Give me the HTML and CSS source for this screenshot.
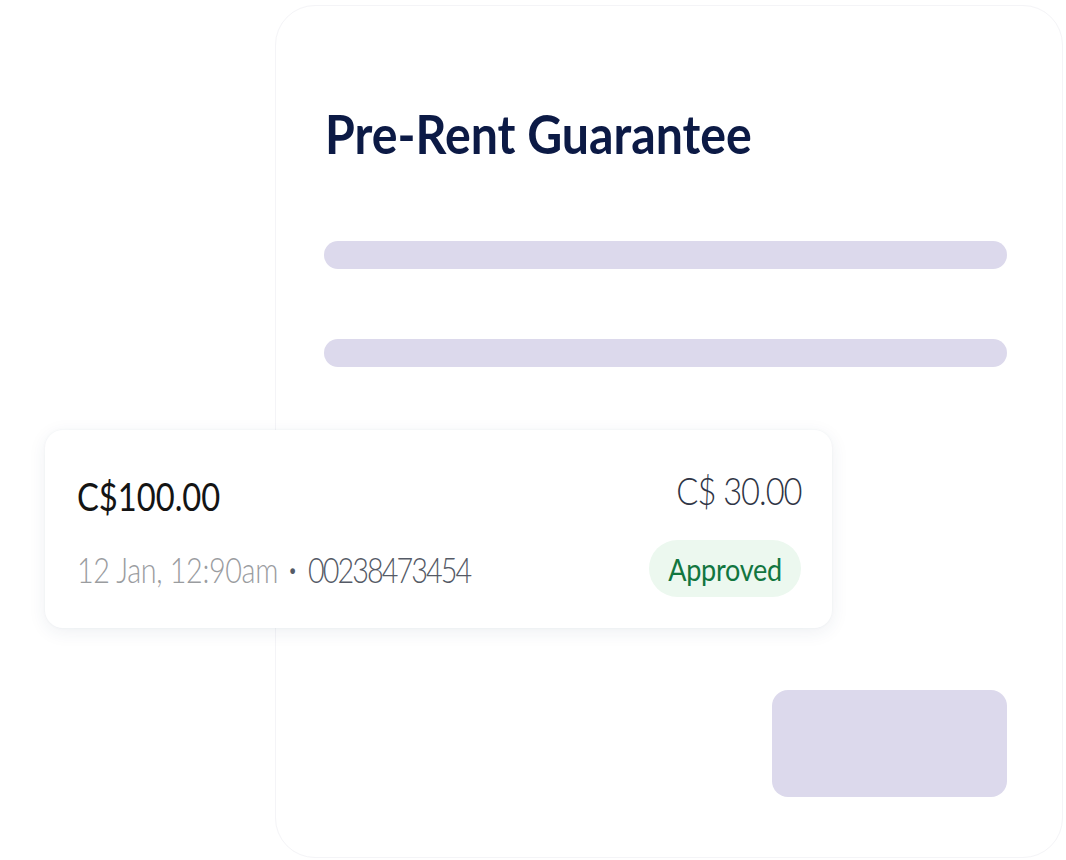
FILE: index.html
```html
<!DOCTYPE html>
<html lang="en">
<head>
<meta charset="utf-8">
<title>Pre-Rent Guarantee</title>
<link rel="stylesheet" href="styles.css">
</head>
<body>
<div class="board">
  <h1 class="title">Pre-Rent Guarantee</h1>
  <div class="bar bar-first"></div>
  <div class="bar bar-second"></div>
  <div class="tx-card">
    <div class="tx-row">
      <span class="tx-amount">C$100.00</span>
      <span class="tx-fee">C$ 30.00</span>
    </div>
    <div class="tx-row tx-row-meta">
      <span class="tx-meta"><span class="tx-date">12 Jan, 12:90am</span><span class="tx-dot">•</span><span class="tx-id">00238473454</span></span>
      <span class="badge"><span class="badge-text">Approved</span></span>
    </div>
  </div>
  <div class="action"></div>
</div>
</body>
</html>
```

FILE: styles.css
```css
* { box-sizing: border-box; }
html, body { margin: 0; padding: 0; background: #ffffff; }
body {
  font-family: Lato, "Open Sans", sans-serif;
  width: 1066px;
  height: 860px;
  overflow: hidden;
}
.board {
  margin: 5px 3px 0 275px;
  height: 853px;
  border: 1px solid #f4f4f7;
  border-radius: 40px;
  padding: 0 55px 0 48px;
  display: flex;
  flex-direction: column;
}
.title {
  margin: 96px 0 0 1px;
  font-size: 53px;
  line-height: 64px;
  font-weight: 700;
  color: #0c1a45;
  letter-spacing: 0;
  transform: scaleX(0.91);
  transform-origin: left center;
  white-space: nowrap;
}
.bar {
  height: 28px;
  border-radius: 14px;
  background: #dcd9ec;
}
.bar-first { margin-top: 75px; }
.bar-second { margin-top: 70px; }
.tx-card {
  margin: 63px 0 0 -279px;
  width: 787px;
  height: 198px;
  background: #ffffff;
  border-radius: 18px;
  box-shadow: 0 4px 18px rgba(40, 60, 100, 0.08), 0 0 3px rgba(40, 60, 100, 0.05);
  padding: 41px 31px 0 32px;
  display: flex;
  flex-direction: column;
}
.tx-row {
  display: flex;
  justify-content: space-between;
  align-items: flex-start;
}
.tx-amount {
  font-size: 38px;
  line-height: 50px;
  color: #141414;
  letter-spacing: 0;
  transform: scaleX(0.86);
  transform-origin: left center;
}
.tx-fee {
  font-size: 38px;
  line-height: 38px;
  font-weight: 300;
  color: #2f3545;
  letter-spacing: -1.2px;
  transform: scaleX(0.86);
  transform-origin: right center;
}
.tx-row-meta {
  margin-top: 19px;
  align-items: center;
}
.tx-meta {
  display: flex;
  align-items: center;
  font-size: 36px;
  font-weight: 300;
  transform: scaleX(0.8);
  transform-origin: left center;
  white-space: nowrap;
}
.tx-date { color: #9a9c9f; letter-spacing: -0.45px; }
.tx-dot { color: #555a66; font-size: 20px; margin: 0 13.5px 0 12.5px; }
.tx-id { color: #555a66; letter-spacing: -2.45px; }
.badge {
  height: 57px;
  width: 152px;
  border-radius: 29px;
  background: #ecf8ef;
  display: flex;
  align-items: center;
  justify-content: center;
}
.badge-text {
  color: #12763f;
  font-size: 30px;
  font-weight: 400;
  letter-spacing: -0.3px;
  transform: scaleX(0.9);
  white-space: nowrap;
}
.action {
  margin-top: 62px;
  align-self: flex-end;
  width: 235px;
  height: 107px;
  border-radius: 16px;
  background: #dcd9ec;
}
```
